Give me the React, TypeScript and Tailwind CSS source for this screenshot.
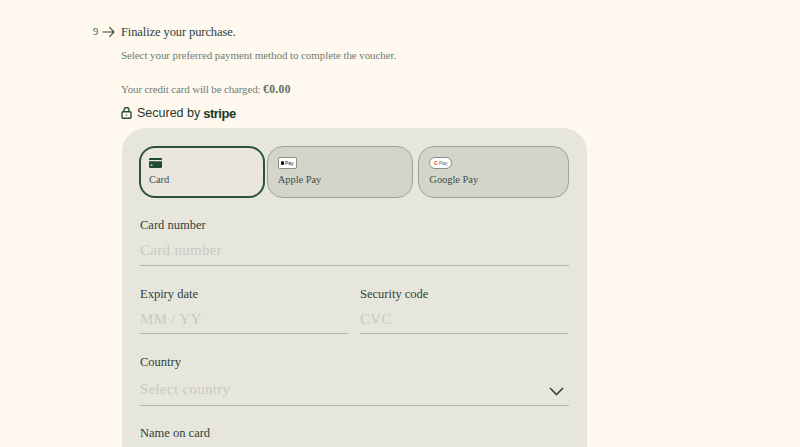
import React from "react";

const serif = "font-['Liberation_Serif',serif]";

function Field({ label, placeholder, className = "", boxClass = "h-[33px] pt-[3px]", icon }: { label: string; placeholder: string; className?: string; boxClass?: string; icon?: React.ReactNode }) {
  return (
    <div className={`flex flex-col ${className}`}>
      <div className="text-[12.5px] leading-[16px] text-[#2f4238]">{label}</div>
      <div className={`flex items-center justify-between border-b border-[#b5b7ac] ${boxClass}`}>
        <span className="text-[15px] tracking-[0.3px] text-[#c9cac1]">{placeholder}</span>
        {icon}
      </div>
    </div>
  );
}

function MethodTab({ label, active, icon, className }: { label: string; active?: boolean; icon: React.ReactNode; className: string }) {
  return (
    <div
      className={`flex h-[52px] flex-col rounded-[16px] ${className} ${
        active ? "border-2 border-[#2f5240] bg-[#e9e6df] pl-[8px] pt-[8px]" : "border border-[#9aa495] bg-[#d3d4ca] pl-[10px] pt-[9px]"
      }`}
    >
      <div className="flex h-[14px] items-center">{icon}</div>
      <div className="mt-[3px] text-[10.5px] leading-[14px] tracking-[-0.05px] text-[#3d5148]">{label}</div>
    </div>
  );
}

export default function App() {
  return (
    <div className={`h-[447px] w-[800px] overflow-hidden bg-[#fff8ef] ${serif}`}>
      <div className="ml-[93px] pt-[24px]">
        <div className="flex h-[16px] items-center">
          <span className="w-[9px] text-[10.5px] text-[#4a5a50]">9</span>
          <svg className="h-[12px] w-[13px]" viewBox="0 0 13 12" fill="none" stroke="#2f4a3b" strokeWidth="1.1">
            <path d="M0.5 6H12M7.5 1.2 12 6l-4.5 4.8" />
          </svg>
          <span className="ml-[6px] text-[12.5px] tracking-[-0.1px] text-[#30433a]">Finalize your purchase.</span>
        </div>
        <div className="ml-[28px] mt-[8px] text-[11px] leading-[14px] tracking-[-0.08px] text-[#6f7d73]">
          Select your preferred payment method to complete the voucher.
        </div>
        <div className="ml-[28px] mt-[20px] text-[11px] leading-[14px] tracking-[-0.15px] text-[#6f7d73]">
          Your credit card will be charged: <span className="text-[11.5px] font-bold tracking-[0.4px] text-[#58705f]">€0.00</span>
        </div>
        <div className="ml-[28px] mt-[9px] flex h-[16px] items-center">
          <svg className="h-[12px] w-[11px]" viewBox="0 0 11 12" fill="none" stroke="#2c4a39" strokeWidth="1.4">
            <rect x="1" y="4.7" width="9" height="6.5" rx="1" />
            <path d="M3 4.7V3a2.5 2.5 0 0 1 5 0v1.7" />
            <circle cx="5.5" cy="8" r="0.7" fill="#2c4a39" stroke="none" />
          </svg>
          <span className="ml-[5px] font-['Liberation_Sans',sans-serif] text-[12.5px] text-[#26352d]">Secured by</span>
          <span className="ml-[3px] font-['Liberation_Sans',sans-serif] text-[13px] font-bold leading-none tracking-[-0.5px] text-[#183a26]">stripe</span>
        </div>

        <div className="ml-[29px] mt-[7px] w-[465px] rounded-t-[24px] bg-[#e6e6dd] pl-[17px] pr-[18px] pt-[18px] pb-[40px]">
          <div className="flex">
            <MethodTab
              label="Card"
              active
              className="w-[126px]"
              icon={
                <svg className="h-[10px] w-[13px]" viewBox="0 0 13 10">
                  <path d="M1.3 0h10.4A1.3 1.3 0 0 1 13 1.3V2H0v-.7A1.3 1.3 0 0 1 1.3 0Z M0 3.3h13v5.4A1.3 1.3 0 0 1 11.7 10H1.3A1.3 1.3 0 0 1 0 8.7Z" fill="#1f4a33" />
                  <rect x="1.5" y="6.6" width="2" height="1.2" fill="#e9e6df" />
                </svg>
              }
            />
            <MethodTab
              label="Apple Pay"
              className="ml-[2px] w-[147px]"
              icon={
                <span className="flex h-[12px] w-[19px] items-center justify-center rounded-[2px] border border-[#8d8d88] bg-white font-['Liberation_Sans',sans-serif] text-[5px] leading-none text-[#222]">
                  <span className="mr-[1px] h-[4px] w-[3px] rounded-full bg-black" />
                  Pay
                </span>
              }
            />
            <MethodTab
              label="Google Pay"
              className="ml-[5px] w-[151px]"
              icon={
                <span className="flex h-[12px] w-[23px] items-center justify-center rounded-full border border-[#8d8d88] bg-white font-['Liberation_Sans',sans-serif] text-[5px] leading-none text-[#666]">
                  <span className="mr-[1px] font-bold text-[#d9603f]">G</span>
                  Pay
                </span>
              }
            />
          </div>

          <Field label="Card number" placeholder="Card number" className="ml-[1px] mt-[19px]" />

          <div className="ml-[1px] mt-[20px] flex">
            <Field label="Expiry date" placeholder="MM / YY" className="w-[208px]" boxClass="h-[32px] pt-[3px]" />
            <Field label="Security code" placeholder="CVC" className="ml-[12px] w-[208px]" boxClass="h-[32px] pt-[3px]" />
          </div>

          <Field
            label="Country"
            placeholder="Select country"
            className="ml-[1px] mt-[20px]"
            boxClass="h-[36px] pt-[4px]"
            icon={
              <svg className="mr-[5px] mt-[4px] h-[9px] w-[15px]" viewBox="0 0 15 9" fill="none" stroke="#2f4a3b" strokeWidth="1.6">
                <path d="M1 1l6.5 6.5L14 1" />
              </svg>
            }
          />

          <div className="ml-[1px] mt-[19px] text-[12.5px] leading-[16px] text-[#2f4238]">Name on card</div>
        </div>
      </div>
    </div>
  );
}
